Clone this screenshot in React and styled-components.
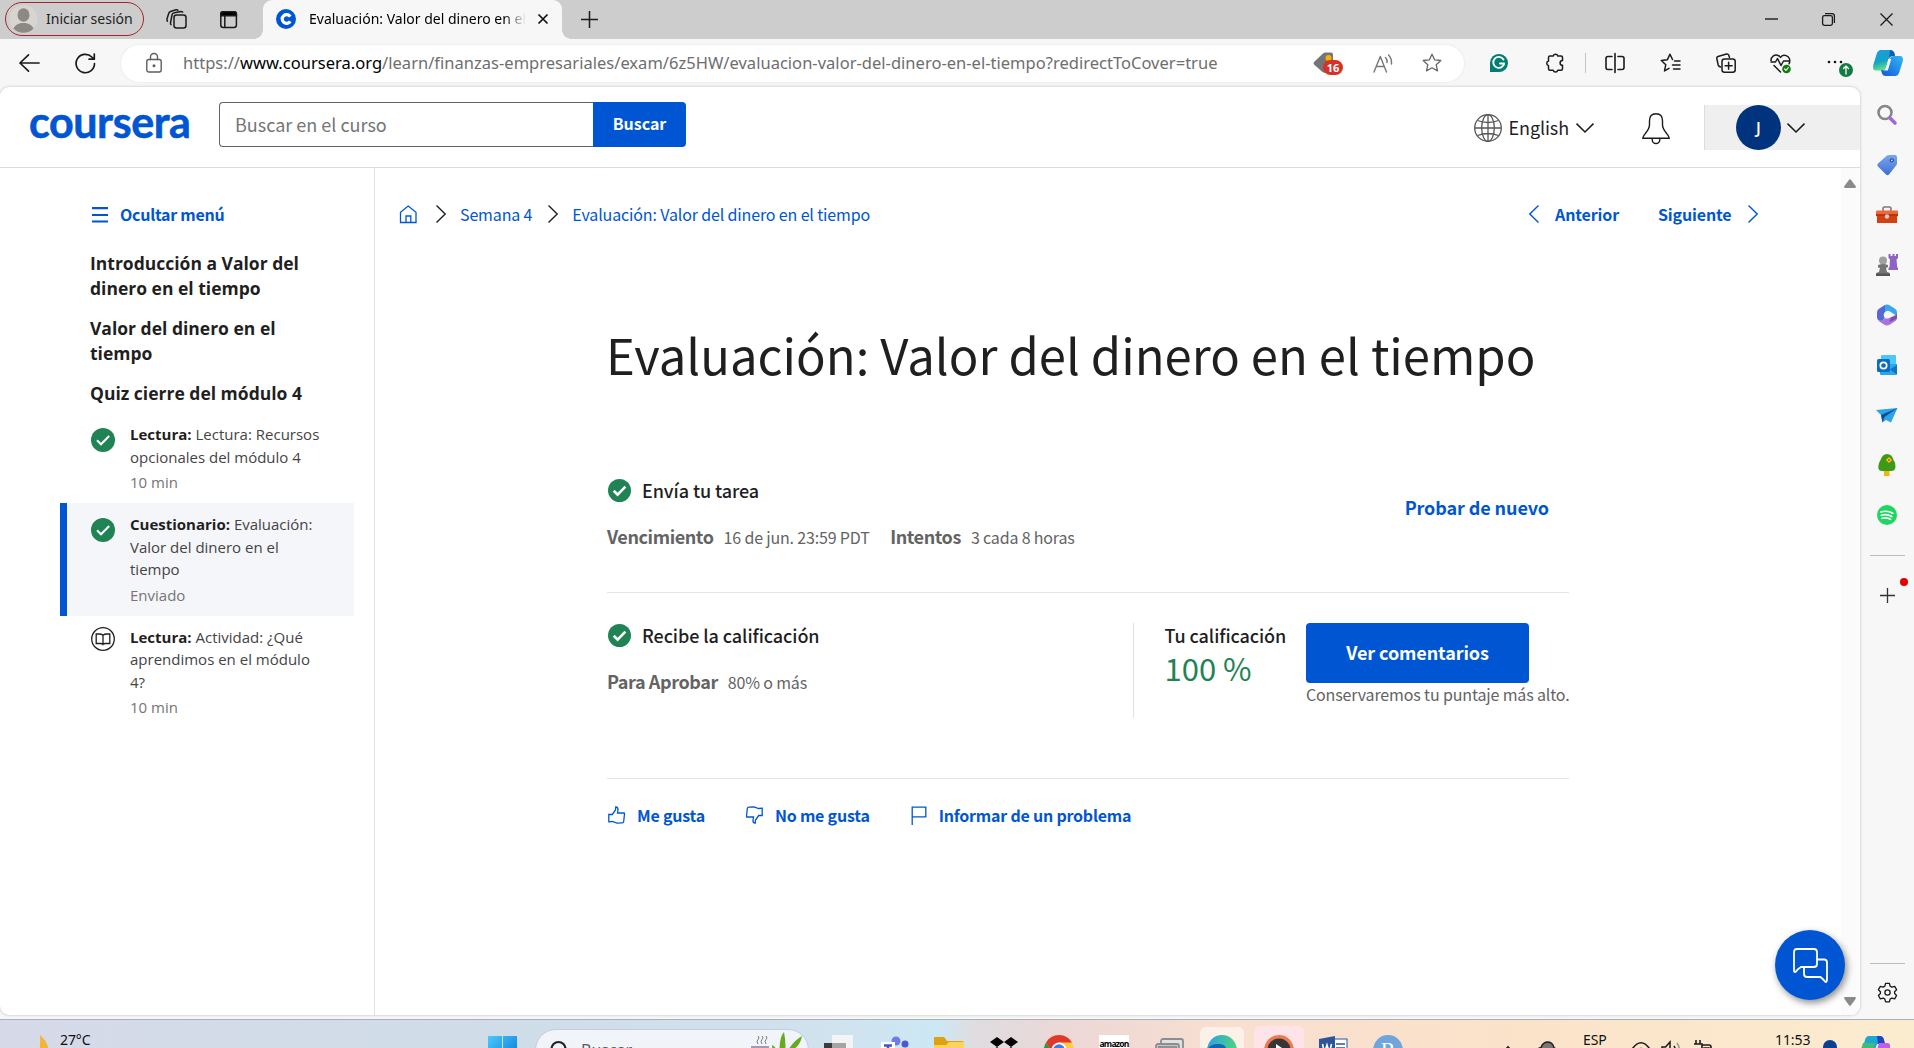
import React from 'react';
import styled, { createGlobalStyle } from 'styled-components';

const SOURCE = '"Noto Sans CJK SC", "Noto Sans", sans-serif';
const OPEN = '"Open Sans", "Noto Sans", sans-serif';
const SYSTEM = '"Noto Sans", "Open Sans", sans-serif';
const BLUE = '#0056d2';
const INK = '#1f1f1f';
const MUTED = '#636363';
const GREEN = '#1f8354';

const GlobalStyle = createGlobalStyle`
  * { box-sizing: border-box; }
  body { margin: 0; overflow: hidden; font-family: ${SOURCE}; color: ${INK}; }
  button, input { font: inherit; border: 0; margin: 0; padding: 0; background: none; }
  a { text-decoration: none; }
  svg { display: block; flex: none; overflow: visible; }
`;

const Desktop = styled.div`
  width: 1914px; height: 1048px; overflow: hidden;
  display: flex; flex-direction: column; background: #f7f7f7;
`;

/* ---------- browser chrome ---------- */
const TabStrip = styled.div`
  height: 39px; flex: none; display: flex; align-items: stretch;
  background: #cdcdcd; font: 14px/20px ${SYSTEM}; color: #000;
`;
const Profile = styled.button`
  && { width: 139px; height: 34px; margin: 2px 0 0 5px; padding-left: 3px;
  display: flex; align-items: center; gap: 8px; color: #222; white-space: nowrap;
  border: 1.4px solid #a4262c; border-radius: 17px; }
`;
const StripIcon = styled.div`
  display: flex; align-items: center; height: 38px; margin-left: ${p => p.$ml}px;
`;
const Tab = styled.div`
  width: 299px; margin-left: 26px; padding: 0 13px 2px; display: flex; align-items: center;
  background: #f7f7f7; border-radius: 9px 9px 0 0; position: relative;
  &::before, &::after {
    content: ''; position: absolute; bottom: 0; width: 9px; height: 9px;
  }
  &::before { left: -9px; background: radial-gradient(circle at 0 0, transparent 8.5px, #f7f7f7 9px); }
  &::after { right: -9px; background: radial-gradient(circle at 100% 0, transparent 8.5px, #f7f7f7 9px); }
`;
const Favicon = styled.span`
  width: 20px; height: 20px; border-radius: 50%; background: ${BLUE};
  display: grid; place-items: center;
`;
const TabTitle = styled.span`
  width: 217px; margin: 0 12px 0 13px; overflow: hidden; white-space: nowrap;
  mask-image: linear-gradient(90deg, #000 90%, transparent 100%);
`;
const Toolbar = styled.div`
  height: 48px; flex: none; display: flex; align-items: center; padding: 0 0 0 19px;
  svg { stroke-linecap: round; stroke-linejoin: round; }
`;
const ToolIcon = styled.div`
  display: flex; align-items: center; justify-content: center; flex: none;
  width: ${p => p.$w || 20}px; margin-left: ${p => p.$ml || 0}px; height: 30px; position: relative;
`;
const AddressBar = styled.div`
  width: 1343px; flex: none; height: 37px; margin-left: 25px; padding-left: 25px; border-radius: 19px;
  background: #fff; display: flex; align-items: center; box-shadow: 0 0 3px rgba(0,0,0,.08);
`;
const Url = styled.span`
  width: 1108px; flex: none; margin-left: 21px; font: 16.5px/24px ${SYSTEM}; letter-spacing: .02px; color: #6e6e6e; white-space: nowrap;
  b { font-weight: 400; color: #000; }
`;
const CountBadge = styled.span`
  position: absolute; left: 10px; top: 12px; width: 20px; height: 15px; border-radius: 8px;
  background: #d93025; color: #fff; font: 700 11px/15px ${SYSTEM}; text-align: center;
`;
const Separator = styled.i`width: 1px; flex: none; height: 20px; background: #c4c4c4; margin-left: 20px;`;

/* ---------- window body ---------- */
const Body = styled.div`height: 932px; flex: none; display: flex;`;
const Page = styled.div`
  width: 1860px; height: 928px; flex: none; background: #fff; overflow: hidden;
  border-radius: 9px; box-shadow: 0 0 3px rgba(0,0,0,.25); display: flex; flex-direction: column; position: relative;
`;
const Header = styled.header`
  height: 81px; flex: none; border-bottom: 1px solid #dcdcdc; display: flex; padding-left: 29px;
`;
const Logo = styled.a`
  width: 190px; height: 60px; padding-top: 5px; font: 700 43px/60px Lato, "Open Sans", sans-serif;
  letter-spacing: -.4px; color: ${BLUE}; -webkit-text-stroke: .6px ${BLUE};
`;
const SearchForm = styled.form`display: flex; height: 45px; margin-top: 15px;`;
const SearchInput = styled.input`
  && { width: 374px; border: 1px solid #636363; border-right: 0; border-radius: 4px 0 0 4px; padding: 0 15px 1px; }
  font: 18px/26px ${SOURCE}; color: #1f1f1f;
  &::placeholder { color: #757575; opacity: 1; }
`;
const SearchButton = styled.button`
  && { width: 93px; background: ${BLUE}; color: #fff; font: 700 16px/24px ${SOURCE}; border-radius: 0 4px 4px 0; padding-bottom: 3px; }
`;
const Language = styled.div`
  margin-left: auto; display: flex; align-items: center; height: 45px; margin-top: 18px;
  font: 18px/26px ${SOURCE}; letter-spacing: -.1px; gap: 7px;
  span { margin-top: -1px; }
`;
const Bell = styled.div`margin: 26px 0 0 48px; width: 28px;`;
const Account = styled.div`
  width: 156px; height: 45px; margin: 18px 0 0 34px; padding-left: 31px; background: #efefef;
  border-left: 1px solid #dcdcdc; display: flex; align-items: center; gap: 6px;
`;
const Avatar = styled.span`
  width: 45px; height: 45px; border-radius: 50%; background: #00337d; color: #fff;
  font: 600 16px/46px ${OPEN}; text-align: center;
`;
const Columns = styled.div`flex: 1; display: flex; min-height: 0;`;

/* ---------- course navigation ---------- */
const SideNav = styled.nav`
  width: 375px; flex: none; border-right: 1px solid #e1e1e1; padding: 31px 20px 0 60px;
`;
const HideMenu = styled.button`
  && { display: flex; align-items: center; height: 30px; margin: 0 0 21.5px 32px; gap: 12px;
  color: ${BLUE}; font: 700 16px/30px ${SOURCE}; letter-spacing: -.27px; }
  svg { margin-top: 2px; }
`;
const Lesson = styled.h3`
  margin: 0 0 ${p => (p.$last ? 7.5 : 15)}px 30px; width: 240px; font: 700 17.5px/25px ${OPEN}; color: ${INK};
`;
const Item = styled.div`
  display: flex; padding: 10px 20px 9.5px ${p => (p.$active ? 23.5 : 30.5)}px;
  border-left: ${p => (p.$active ? `7px solid ${BLUE}` : '0')};
  background: ${p => (p.$active ? '#f5f6f9' : 'transparent')};
  svg { margin-top: ${p => (p.$open ? 1 : 5)}px; }
`;
const ItemText = styled.div`
  margin-left: 15.5px; width: 196px; flex: none; font: 15px/22.5px ${OPEN}; color: #444;
  b { color: ${INK}; }
`;
const ItemNote = styled.div`margin-top: 3px; color: #757575;`;

/* ---------- content ---------- */
const Main = styled.main`flex: 1; padding: 31px 0 0 23px; min-width: 0;`;
const NavRow = styled.div`
  display: flex; align-items: center; height: 30px; width: 1359.5px; color: ${BLUE};
  font: 16px/30px ${SOURCE}; letter-spacing: -.14px;
`;
const Crumb = styled.a`margin: ${p => p.$m}; white-space: nowrap;`;
const Step = styled.a`
  display: flex; align-items: center; gap: 16px; font-weight: 700; margin-left: ${p => p.$ml};
`;
const Sheet = styled.section`width: 962px; margin-left: 209px;`;
const Title = styled.h1`
  margin: 94.5px 0 92.5px -1px; font: 400 49px/60px ${SOURCE}; white-space: nowrap;
`;
const Block = styled.div`
  display: flex; justify-content: space-between; border-bottom: 1px solid #e5e5e5;
  padding: ${p => p.$pad};
`;
const BlockTitle = styled.h2`
  margin: 0; display: flex; align-items: center; gap: 11.5px; height: ${p => p.$h}px; padding-left: .5px;
  font: 500 18px/24px ${SOURCE}; letter-spacing: -.08px; color: ${INK};
`;
const Meta = styled.div`
  margin-top: ${p => p.$mt}px; display: flex; align-items: baseline; color: ${MUTED};
  font: 16px/24px ${SOURCE}; letter-spacing: -.17px; white-space: nowrap;
  b { font-size: 18px; letter-spacing: -.41px; margin-right: 10px; }
  span { margin-right: 20.5px; }
`;
const TextAction = styled.a`
  margin: 19px 20px 0 0; color: ${BLUE}; font: 700 18px/24px ${SOURCE}; letter-spacing: -.1px;
`;
const Grade = styled.div`
  height: 95px; border-left: 1px solid #e1e1e1; padding-left: 31px; display: flex; gap: 19px;
`;
const GradeLabel = styled.div`font: 500 18px/24px ${SOURCE}; letter-spacing: -.08px; width: 122.5px; white-space: nowrap;`;
const GradeValue = styled.div`font: 400 31px/42px ${SOURCE}; color: ${GREEN};`;
const GradeSide = styled.div`width: 263px;`;
const Primary = styled.button`
  && { width: 223px; height: 60px; border-radius: 4px; background: ${BLUE}; color: #fff;
  font: 700 18px/24px ${SOURCE}; letter-spacing: -.1px; display: block; padding-bottom: 2px; }
`;
const Hint = styled.div`
  color: ${MUTED}; font: 16px/24px ${SOURCE}; letter-spacing: -.15px; margin-top: -1px; white-space: nowrap;
`;
const Feedback = styled.div`display: flex; margin-top: 24px; padding-left: 1px;`;
const FeedbackLink = styled.a`
  display: flex; align-items: center; gap: 12px; margin-right: ${p => p.$mr || 0}px; color: ${BLUE};
  font: 700 16px/24px ${SOURCE}; letter-spacing: -.22px;
`;
const Scrollbar = styled.div`
  width: 19px; flex: none; background: #fbfbfb; display: flex; flex-direction: column;
  justify-content: space-between; align-items: center; padding: 11px 1px 9px 0;
`;
const Chat = styled.button`
  && { position: absolute; left: 1775px; top: 843px; width: 70px; height: 70px; border-radius: 50%;
  background: ${BLUE}; box-shadow: 2px 3px 7px rgba(0,0,0,.45); display: grid; place-items: center; }
`;

/* ---------- edge side bar ---------- */
const EdgeBar = styled.aside`
  flex: 1; display: flex; flex-direction: column; align-items: center; padding-top: 3px;
`;
const EdgeIcon = styled.div`
  height: 50px; display: flex; align-items: center; justify-content: center; position: relative;
`;
const EdgeRule = styled.i`width: 35px; height: 1px; background: #bdbdbd; margin: ${p => p.$m};`;
const Dot = styled.i`
  position: absolute; right: -13px; top: 8px; width: 8px; height: 8px; border-radius: 50%; background: #e80000;
`;

/* ---------- taskbar ---------- */
const Taskbar = styled.footer`
  height: 29px; flex: none; overflow: hidden; border-top: 1px solid #a9b0b7;
  background: linear-gradient(90deg, #d6dae8 0, #cfdde9 28%, #d0e2ee 43%, #cce8f4 49%, #dfdcdf 51%, #ecd8d6 56%, #f8dfd0 64%, #fbe3ca 80%, #fbecd0 100%);
`;
const TaskRow = styled.div`
  height: 60px; display: flex; align-items: center; font: 14px/20px ${SYSTEM}; color: #111;
`;
const TaskItem = styled.div`
  width: ${p => p.$w}px; height: ${p => p.$h || 30}px; flex: none; margin-left: ${p => p.$ml}px;
  display: flex; align-items: center; justify-content: center; border-radius: 6px 6px 0 0;
  background: ${p => p.$bg || 'transparent'};
`;
const TaskText = styled.div`
  width: ${p => p.$w}px; flex: none; margin: 0 0 21px ${p => p.$ml}px; letter-spacing: -.1px;
`;
const TaskSearch = styled.div`
  width: 274px; height: 42px; flex: none; border-radius: 21px; margin-left: 18px; padding: 0 6px 0 14px; background: #f1f5fa;
  border: 1px solid #c3cedb; display: flex; align-items: center; font-size: 16px; color: #5d5d5d;
  span { flex: 1; margin-left: 13px; }
`;
const AmazonTile = styled.div`
  width: 30px; height: 30px; flex: none; background: #fff; font: 700 8.5px/17px ${OPEN};
  letter-spacing: -.75px; text-align: center; color: #000;
`;
const LetterDisc = styled.div`
  width: 30px; height: 30px; flex: none; border-radius: 50%; background: #6fa5dc; color: #fff;
  font: 22px/30px "Liberation Serif", serif; text-align: center;
`;

const Svg = ({ w = 20, h, vb, c = '#1b1b1b', sw = 1.4, children }) => (
  <svg width={w} height={h || w} viewBox={vb || `0 0 ${w} ${h || w}`} fill="none" stroke={c} strokeWidth={sw}>{children}</svg>
);
const Chevron = ({ dir, c }) => (
  <Svg w={10} h={18} c={c} sw={1.4}><path d={dir === 'left' ? 'M9.5.5 .8 9l8.7 8.5' : 'M.5.5 9.2 9 .5 17.5'} /></Svg>
);
const ChevronDown = () => <Svg w={18} h={10} sw={1.5}><path d="M.5.6 9 9 17.5.6" /></Svg>;
const DoneIcon = ({ s = 24 }) => (
  <svg width={s} height={s} viewBox="0 0 24 24"><circle cx="12" cy="12" r="12" fill={GREEN} /><path d="m6 12.300 4 4L18.200 8" fill="none" stroke="#fff" strokeWidth={s < 24 ? 2.7 : 2} /></svg>
);
const BookIcon = () => (
  <Svg w={24} c={INK} sw={1.3}><circle cx="12" cy="12" r="11.3" /><path d="M12 8.200C11 7.300 9.500 7 8 7H5.200v9.500h4.500c1 0 1.800.2 2.300 1 .5-.8 1.300-1 2.300-1h4.500V7H16c-1.500 0-3 .3-4 1.200zm0 0v9" /></Svg>
);
const STAR = 'M10 1.200l2.600 5.600 6.200.7-4.600 4.200 1.300 6.200L10 14.800l-5.500 3.100 1.300-6.200L1.200 7.500l6.200-.7z';

function BrowserTop() {
  return (
    <>
      <TabStrip>
        <Profile>
          <svg width="29" height="28" viewBox="0 0 29 28"><circle cx="14.500" cy="14" r="14" fill="#d8d5d1" /><ellipse cx="14.500" cy="10" rx="6" ry="6.800" fill="#8c8984" /><path d="M4.500 23.500c2-4 5.500-5.500 10-5.500s8 1.500 10 5.500c-5 5.800-15 5.800-20 0z" fill="#8c8984" /></svg>
          Iniciar sesión
        </Profile>
        <StripIcon $ml={22}><Svg w={21} h={20} sw={1.5}><rect x="8" y="6" width="12" height="13" rx="2.500" /><path d="M5.500 16c-1-.4-1.200-1-1-2L6 6c.3-1.500 1-2 2.200-2.200L15 2.500c1 0 1.800.3 2 1.200M2 12.500C.8 12 .7 11 1 10l1.500-5c.4-1.500 1-2.200 2-2.500L10 .8c1.200-.3 2 0 2.300 1" /></Svg></StripIcon>
        <StripIcon $ml={33}><Svg w={17} h={17} sw={1.5}><rect x=".8" y=".8" width="15.600" height="15.600" rx="2.500" /><path d="M.8 3.200c0-1.600.8-2.400 2.400-2.400H14c1.600 0 2.400.8 2.400 2.400v1.600H.8z" fill="#000" /><path d="M4.800 5v11" /></Svg></StripIcon>
        <Tab>
          <Favicon><Svg w={12} c="#fff" sw={3.2}><path d="M10.300 3.600A4.400 4.400 0 1 0 10.300 8.400" /></Svg></Favicon>
          <TabTitle>Evaluación: Valor del dinero en el tiempo</TabTitle>
          <Svg w={10} sw={1.7} c="#111"><path d="M.5.5l9 9M9.500.5l-9 9" /></Svg>
        </Tab>
        <StripIcon $ml={19}><Svg w={17} sw={1.5}><path d="M8.500 0v17M0 8.500h17" /></Svg></StripIcon>
        <StripIcon $ml={1167}><Svg w={13} h={2}><path d="M0 1h13" /></Svg></StripIcon>
        <StripIcon $ml={44}><Svg w={13} h={13} sw={1.3}><rect x=".6" y="2.600" width="9.800" height="9.800" rx="1.800" /><path d="M3 .7h7c1.600 0 2.400.8 2.400 2.400V10" /></Svg></StripIcon>
        <StripIcon $ml={45}><Svg w={13} sw={1.3}><path d="M.5.5l12 12M12.500.5l-12 12" /></Svg></StripIcon>
      </TabStrip>
      <Toolbar>
        <ToolIcon $w={21}><Svg w={21} h={18} sw={1.7}><path d="M20 9H1M9.500.8 1 9l8.500 8.200" /></Svg></ToolIcon>
        <ToolIcon $w={21} $ml={35}><Svg w={21} sw={1.7}><path d="M19.500 10.500a9.200 9.200 0 1 1-2.700-6.500l2 2M19.300 1v5.200h-5.200" /></Svg></ToolIcon>
        <AddressBar>
          <Svg w={16} h={20} c="#5e5e5e"><rect x=".8" y="6.500" width="14.400" height="12.500" rx="2" /><path d="M4.500 6.500V4a3.500 3.500 0 0 1 7 0v2.500" /><circle cx="8" cy="12.800" r=".8" fill="#5e5e5e" /></Svg>
          <Url>https://<b>www.coursera.org</b>/learn/finanzas-empresariales/exam/6z5HW/evaluacion-valor-del-dinero-en-el-tiempo?redirectToCover=true</Url>
          <ToolIcon $w={30} $ml={22}>
            <svg width="30" height="22" viewBox="0 0 30 22"><path d="M1 10 10 1.500Q11 .5 12.500.5H18q2 0 2 2V14l-7 7Q11 21 9.500 20L1 12.500q-1-1.200 0-2.500z" fill="#757575" /><circle cx="15.500" cy="6" r="3" fill="#f5b400" /></svg>
            <CountBadge>16</CountBadge>
          </ToolIcon>
          <ToolIcon $ml={30}><Svg w={20} c="#777"><path d="M1 19 7.300 3.500 13.500 19M3.500 13.500H11M12.500 4.500q2 2 1.500 5M15.500 2q3.500 3.500 3 9" /></Svg></ToolIcon>
          <ToolIcon $ml={29}><Svg w={20} c="#666" sw={1.3}><path d={STAR} /></Svg></ToolIcon>
        </AddressBar>
        <ToolIcon $ml={25}><Svg w={20} c="none"><path d="M1 19V9.500A9 9 0 1 1 10 19z" fill="#027e6f" /><path d="M14.500 6.500A5.500 5.500 0 1 0 15.200 10.500H11" stroke="#fff" strokeWidth="1.900" /></Svg></ToolIcon>
        <ToolIcon $ml={36}><Svg w={20} sw={1.5}><path d="M5 3h3.200a2.400 2.400 0 0 1 4.600 0H16q1.500 0 1.500 1.500v3a2.400 2.400 0 1 0 0 4.800v3.500q0 1.500-1.500 1.500h-3.200a2.400 2.400 0 0 1-4.600 0H5q-1.500 0-1.500-1.500v-3.200a2.400 2.400 0 0 1 0-4.600V4.500Q3.500 3 5 3z" /></Svg></ToolIcon>
        <Separator />
        <ToolIcon $ml={19}><Svg w={20} sw={1.6}><path d="M10 .5v19M7 3.500H3Q1 3.500 1 5.500v9q0 2 2 2h4M13 3.500h4q2 0 2 2v9q0 2-2 2h-4" /></Svg></ToolIcon>
        <ToolIcon $ml={35}><Svg w={21} h={20} sw={1.5}><path d="M12.500 6.500 10 1.200 7.300 6.800l-6 .7 4.500 4.200-1.300 6.200L9 15.300M14.500 8H20M12.500 12H20M13.500 16H20" /></Svg></ToolIcon>
        <ToolIcon $ml={36}><Svg w={20} sw={1.5}><path d="M4.500 14 3.500 13.500Q2.500 13 2.200 12L.8 5.500Q.5 4 2 3.500L10.500 1q1.500-.4 2.200 1l.8 2.500" /><rect x="6" y="6" width="13.200" height="13.200" rx="2.500" /><path d="M12.600 9.200v7M9.100 12.700h7" /></Svg></ToolIcon>
        <ToolIcon $ml={34} $w={21}><Svg w={21} sw={1.5}><path d="M1 7.500C1 3.500 4.500 1.500 7.500 2.200 9 2.500 10 3.500 10.500 4.500 11 3.500 12.500 2.200 14 2.200c3 0 6 2.300 5.800 5.800 0 1-.3 2-.8 2.800M4 12.500l6.500 6.500M1 9h4.500l2-3.500 3.500 7 2.500-4.500H19" /><circle cx="16.500" cy="16" r="4.300" fill="#107c10" stroke="none" /><path d="m14.700 16 1.300 1.300 2.300-2.600" stroke="#fff" strokeWidth="1.200" /></Svg></ToolIcon>
        <ToolIcon $ml={36} $w={27}><Svg w={27} h={24} c="none"><circle cx="2" cy="11" r="1.300" fill="#111" /><circle cx="8" cy="11" r="1.300" fill="#111" /><circle cx="14" cy="11" r="1.300" fill="#111" /><circle cx="19" cy="19" r="7" fill="#107c41" /><path d="M19 23v-8M16.500 17.500 19 15l2.500 2.500" stroke="#fff" strokeWidth="1.300" /></Svg></ToolIcon>
        <ToolIcon $ml={19} $w={30}><CopilotMark /></ToolIcon>
      </Toolbar>
    </>
  );
}

const CopilotMark = () => (
  <svg width="30" height="26" viewBox="0 0 30 26">
    <defs>
      <linearGradient id="cpA" x1="0" y1="0" x2=".3" y2="1"><stop offset="0" stopColor="#1a9de0" /><stop offset=".6" stopColor="#14a3c4" /><stop offset="1" stopColor="#62e08a" /></linearGradient>
      <linearGradient id="cpB" x1="1" y1="0" x2="0" y2="1"><stop offset="0" stopColor="#32b8f5" /><stop offset="1" stopColor="#1359d8" /></linearGradient>
    </defs>
    <path d="M8 0h9q3.500 0 4.500 3.500L22 6h-3q-2.500 0-3.200 3L13 18q-.9 2.500-3.500 2.500H3Q-1 20.500.3 15L3.800 3.500Q5 0 8 0z" fill="url(#cpA)" />
    <path d="M22 26h-9q-3.500 0-4.300-3.500L8 20h3q2.500 0 3.200-3L17 8.500Q18 6 20.500 6H27q4 0 2.700 5.500L26.200 22.500Q25 26 22 26z" fill="url(#cpB)" />
    <path d="M17 0q3.500 0 4.500 3.500L22 6h-2q-3 .2-4 3.500z" fill="#0a3fa8" opacity=".7" />
    <path d="M15.300 9h3L14.800 20.500H9.500Q12 20.500 13 18z" fill="#f7f7f7" />
  </svg>
);

function Sidebar() {
  return (
    <SideNav>
      <HideMenu><Svg w={16} c={BLUE} sw={2.2}><path d="M0 1.200h16M0 8h16M0 14.500h16" /></Svg>Ocultar menú</HideMenu>
      <Lesson>Introducción a Valor del dinero en el tiempo</Lesson>
      <Lesson>Valor del dinero en el tiempo</Lesson>
      <Lesson $last>Quiz cierre del módulo 4</Lesson>
      <Item><DoneIcon /><ItemText><b>Lectura:</b> Lectura: Recursos opcionales del módulo 4<ItemNote>10 min</ItemNote></ItemText></Item>
      <Item $active><DoneIcon /><ItemText><b>Cuestionario:</b> Evaluación: Valor del dinero en el tiempo<ItemNote>Enviado</ItemNote></ItemText></Item>
      <Item $open><BookIcon /><ItemText><b>Lectura:</b> Actividad: ¿Qué aprendimos en el módulo 4?<ItemNote>10 min</ItemNote></ItemText></Item>
    </SideNav>
  );
}

function Content() {
  return (
    <Main>
      <NavRow>
        <Svg w={20} h={18} c={BLUE} sw={1.3}><path d="M2.500 17.500V7.200L10.200 1l7.800 6.200v10.300zM8 17.500V11h4.800v6.500" /></Svg>
        <Crumb $m="0 0 0 18px"><Chevron c={INK} /></Crumb>
        <Crumb $m="-1px 0 0 14px">Semana 4</Crumb>
        <Crumb $m="0 0 0 16px"><Chevron c={INK} /></Crumb>
        <Crumb $m="-1px 0 0 14px">Evaluación: Valor del dinero en el tiempo</Crumb>
        <Step $ml="auto"><Chevron dir="left" c={BLUE} /><span>Anterior</span></Step>
        <Step $ml="39px"><span>Siguiente</span><Chevron c={BLUE} /></Step>
      </NavRow>
      <Sheet>
        <Title>Evaluación: Valor del dinero en el tiempo</Title>
        <Block $pad="0 0 43px">
          <div>
            <BlockTitle $h={28}><DoneIcon s={23} />Envía tu tarea</BlockTitle>
            <Meta $mt={20}><b>Vencimiento</b><span>16 de jun. 23:59 PDT</span><b>Intentos</b><span>3 cada 8 horas</span></Meta>
          </div>
          <TextAction>Probar de nuevo</TextAction>
        </Block>
        <Block $pad="30px 0 60px">
          <div>
            <BlockTitle $h={24}><DoneIcon s={23} />Recibe la calificación</BlockTitle>
            <Meta $mt={22}><b>Para Aprobar</b><span>80% o más</span></Meta>
          </div>
          <Grade>
            <div><GradeLabel>Tu calificación</GradeLabel><GradeValue>100 %</GradeValue></div>
            <GradeSide><Primary>Ver comentarios</Primary><Hint>Conservaremos tu puntaje más alto.</Hint></GradeSide>
          </Grade>
        </Block>
        <Feedback>
          <FeedbackLink $mr={41}><Svg w={17} h={18} c={BLUE} sw={1.3}><path d="M.8 8.500h3.500L7.500 4l.3-3.200q2.400.2 2.200 3L9.500 7H16q.6 0 .5.800l-.8 7.700q-.2 1.300-1.500 1.300L9 17.200 4.300 15.500.8 15.800z" /></Svg>Me gusta</FeedbackLink>
          <FeedbackLink $mr={41}><Svg w={17} h={18} c={BLUE} sw={1.3}><path d="M16.200 9.500h-3.500L9.500 14l-.3 3.200q-2.400-.2-2.200-3L7.500 11H1q-.6 0-.5-.8l.8-7.700Q1.500 1.200 2.800 1.200L8 .8l4.700 1.700 3.500-.3z" /></Svg>No me gusta</FeedbackLink>
          <FeedbackLink><Svg w={16} h={19} c={BLUE} sw={1.3}><path d="M1.200 19V1.200h13.600v9.600H1.200" /></Svg>Informar de un problema</FeedbackLink>
        </Feedback>
      </Sheet>
    </Main>
  );
}

function EdgeTools() {
  return (
    <EdgeBar>
      <EdgeIcon><svg width="20" height="20" viewBox="0 0 20 20"><circle cx="8" cy="7.500" r="6.500" fill="none" stroke="#868686" strokeWidth="2.600" /><path d="m13 13 5 5" stroke="#a168d8" strokeWidth="3.600" strokeLinecap="round" /></svg></EdgeIcon>
      <EdgeIcon><svg width="20" height="22" viewBox="0 0 20 22"><defs><linearGradient id="tg" y2="1" x2="0"><stop stopColor="#7aa7ee" /><stop offset="1" stopColor="#3e6fd0" /></linearGradient></defs><path d="M10 1.500Q11 1 12 1h6q2 0 2 2v6q0 1.300-.7 2.200L12 20.500q-1.500 1.500-3 0L1 12.500q-1.500-1.500 0-3z" fill="url(#tg)" /><circle cx="14.800" cy="6.300" r="2.100" fill="#244fa5" /><circle cx="14.800" cy="6.300" r=".9" fill="#dce8ff" /></svg></EdgeIcon>
      <EdgeIcon><svg width="22" height="18" viewBox="0 0 22 18"><path d="M7 5V2.500Q7 1 8.500 1h5Q15 1 15 2.500V5" fill="none" stroke="#7b7b7b" strokeWidth="1.600" /><rect y="4.500" width="22" height="6" rx="1" fill="#f0653a" /><path d="M1 8.500h20V17H1z" fill="#d2410f" /><path d="M0 8h22v2H0z" fill="#b8360b" /><circle cx="11" cy="10.500" r="2.200" fill="#ccc" /></svg></EdgeIcon>
      <EdgeIcon><svg width="22" height="24" viewBox="0 0 22 24"><path d="M12.500 1h2v2h2V1h2v2h1.500V1H22v4l-1.500 1.500.7 7.500.8 1v2h-9.500v-2l1-1 .5-7.500L12.500 5z" fill="#8f63c4" /><circle cx="7" cy="7.500" r="4" fill="#a0a0a0" /><path d="M2 12q5-2 10 0v2q-1.500 1-2 1l1 4q3 .5 3 2v2H0v-2q0-1.500 3-2l1-4q-2 0-2-1z" fill="#757575" /><path d="M0 20.500h14V23H0z" fill="#555" /></svg></EdgeIcon>
      <EdgeIcon><svg width="20" height="22" viewBox="0 0 20 22"><path d="M7 1.500Q10-.5 13 1.500L18 4.800Q20 6 20 8.500V12L13 7.500q-3-1.800-5 1V1z" fill="#36a9e8" /><path d="M0 8.500Q0 6 2 4.800L7 1.500l1-.5v13l-3 3Q0 17 0 13z" fill="#5568d6" /><path d="M0 13q0 5 5 3.500l3.500-2.300L20 12v1.500q0 2.500-2 3.700l-5 3.300q-3 2-6 0l-5-3.300Q0 16 0 13z" fill="#a873dc" /><path d="M14 13.500 20 10v4.500L12.500 18z" fill="#6b3f9d" opacity=".75" /><circle cx="10.200" cy="11" r="3.500" fill="#f7f7f7" /></svg></EdgeIcon>
      <EdgeIcon><svg width="20" height="20" viewBox="0 0 20 20"><rect x="4" width="15" height="12" rx="1" fill="#4cc8f4" /><path d="M3 9h17v10q0 1-1 1H4q-1 0-1-1z" fill="#28a8ea" /><path d="m20 10-7 4.500 7 5z" fill="#1272bd" /><rect y="4" width="13" height="13" rx="1.500" fill="#0a6cc4" /><circle cx="6.500" cy="10.500" r="3.200" fill="none" stroke="#fff" strokeWidth="1.700" /></svg></EdgeIcon>
      <EdgeIcon><svg width="22" height="15" viewBox="0 0 22 15"><path d="M0 2 21.500 0 15 14.500 10 12l-3.500 2.500L5 7z" fill="#2ba4e8" /><path d="M5 7 21.500 0 8.500 9l-2 5.500z" fill="#0a4d94" /></svg></EdgeIcon>
      <EdgeIcon><svg width="18" height="22" viewBox="0 0 18 22"><rect x="6" y="15" width="5.500" height="7" fill="#f7b30c" /><path d="M9 0q5 0 6.500 6Q18 9 17.500 13q-.5 4-4 4h-9Q0 17 .3 12.500.5 9 2.500 6 4.500 0 9 0z" fill="#3c9a16" /><path d="M7.800 6 11 3l3.200 3L11 9z" fill="#f7c416" /><circle cx="11" cy="6" r="1.100" fill="#e2550b" /></svg></EdgeIcon>
      <EdgeIcon><svg width="20" height="20" viewBox="0 0 20 20"><circle cx="10" cy="10" r="10" fill="#1ed760" /><path d="M3.800 7q6.500-2 12 1.200M4.300 10.300q5.700-1.600 10.400 1.200M5 13.300q4.700-1.300 8.500 1" stroke="#fff" strokeWidth="1.700" fill="none" strokeLinecap="round" /></svg></EdgeIcon>
      <EdgeRule $m="15px 0 14px" />
      <EdgeIcon><Svg w={15} c="#333" sw={1.3}><path d="M7.500 0v15M0 7.500h15" /></Svg><Dot /></EdgeIcon>
      <EdgeRule $m="343px 0 3px" />
      <EdgeIcon><Svg w={21} sw={1.5} vb="0 0 24 24"><circle cx="12" cy="12" r="3" /><path d="M9.800 1.500h4.400l.8 3.200 2 1.200 3.200-.9 2.200 3.800-2.300 2.300v2l2.300 2.300-2.200 3.800-3.200-.9-2 1.200-.8 3.200H9.800L9 19.500l-2-1.200-3.200.9-2.200-3.800 2.300-2.300v-2L1.600 8.800 3.800 5l3.200.9 2-1.200z" strokeLinejoin="round" /></Svg></EdgeIcon>
    </EdgeBar>
  );
}

function WindowsTaskbar() {
  return (
    <Taskbar>
      <TaskRow>
        <TaskItem $w={14} $ml={36}><svg width="14" height="30" viewBox="0 0 14 30"><path d="M4 0q8 7 8.500 15Q12 24 6 30H0q5-14 4-30z" fill="#f4b632" /></svg></TaskItem>
        <TaskText $w={40} $ml={10}>27°C</TaskText>
        <TaskItem $w={29} $ml={388}><svg width="29" height="29" viewBox="0 0 29 29"><defs><linearGradient id="wn" x2="1" y2="1"><stop stopColor="#4cc9fb" /><stop offset="1" stopColor="#0072d4" /></linearGradient></defs><path d="M0 0h14v14H0zM15 0h14v14H15zM0 15h14v14H0zM15 15h14v14H15z" fill="url(#wn)" /></svg></TaskItem>
        <TaskSearch>
          <Svg w={18} sw={2.2} c="#222"><circle cx="8.500" cy="8" r="7" /><path d="m13 13 5 5" /></Svg>
          <span>Buscar</span>
          <svg width="52" height="36" viewBox="0 0 52 36"><path d="M8 12q-2-3 0-4.500T8 4M12 12q-2-3 0-4.500T12 4M16 12q-2-3 0-4.500T16 4" stroke="#777" fill="none" /><path d="M1 14h18v14H5Q1 24 1 14z" fill="#a898b8" /><path d="M31 34Q38 20 34 0q-7 8-3 34zM31 34Q38 12 52 4q-2 12-14 16zM31 24q-4-8-9-11 0 8 7 13z" fill="#6aa81c" /></svg>
        </TaskSearch>
        <TaskItem $w={29} $ml={15}><svg width="29" height="30" viewBox="0 0 29 30"><rect x="8" width="21" height="24" rx="1" fill="#f4f4f4" /><rect y="8" width="22" height="18" fill="#3c3c3c" /><rect x="8" y="8" width="14" height="16" fill="#a5a5a5" /></svg></TaskItem>
        <TaskItem $w={28} $ml={28}><svg width="28" height="28" viewBox="0 0 28 28"><circle cx="15" cy="5" r="4.500" fill="#6f7be6" /><circle cx="24" cy="8" r="3.500" fill="#5059c9" /><path d="M5 12h23v10q-6 8-17 5z" fill="#5059c9" /><rect y="6" width="14" height="16" fill="#fff" /><path d="M3 9.500h8M7 9.500v9" stroke="#4b53bc" strokeWidth="2.500" /></svg></TaskItem>
        <TaskItem $w={30} $ml={25}><svg width="30" height="26" viewBox="0 0 30 26"><path d="M0 1q0-1 1-1h9l3 4h15q2 0 2 2v18H0z" fill="#e0a010" /><path d="M0 8h12l3-3h15v21H0z" fill="#fcd45a" /></svg></TaskItem>
        <TaskItem $w={28} $ml={26}><svg width="28" height="26" viewBox="0 0 28 26"><path d="m7 0 7 5-7 5-7-5zM21 0l7 5-7 5-7-5zM7 10l7 5-7 5-7-5zM21 10l7 5-7 5-7-5zM14 17l7 4.500-7 4.500-7-4.500z" fill="#050505" /></svg></TaskItem>
        <TaskItem $w={30} $ml={26}><svg width="30" height="30" viewBox="0 0 30 30"><circle cx="15" cy="15" r="15" fill="#ffcd42" /><path d="M2 7.500A15 15 0 0 1 28 7.500H15l-6.500 11z" fill="#e1382c" /><path d="m2 7.500 6.500 11L15 30A15 15 0 0 1 2 7.500z" fill="#229b4b" /><circle cx="15" cy="15" r="7.500" fill="#fff" /><circle cx="15" cy="15" r="5.800" fill="#3d7de8" /></svg></TaskItem>
        <TaskItem $w={30} $ml={25}><AmazonTile>amazon</AmazonTile></TaskItem>
        <TaskItem $w={29} $ml={26}><Svg w={29} h={24} c="#8b8d90" sw={1.8}><rect x="6" y="1" width="22" height="18" rx="2" fill="#e1e1df" /><rect x="1" y="6" width="23" height="18" rx="2" fill="#c2c6c9" /><path d="M3 9h19" /></Svg></TaskItem>
        <TaskItem $w={44} $h={46} $ml={16} $bg="rgba(255,250,244,.65)"><svg width="30" height="30" viewBox="0 0 30 30"><defs><linearGradient id="eg" x2="1" y2=".3"><stop stopColor="#2d9fe8" /><stop offset="1" stopColor="#48d57b" /></linearGradient></defs><circle cx="15" cy="15" r="15" fill="url(#eg)" /><path d="M0 17Q1 9 11 9q8 0 8 5-5 0-4 8l4 7.500A15 15 0 0 1 0 17z" fill="#1464bd" /><path d="M14 16q1-3 4-3 2 0 1.500 3z" fill="#fff" /></svg></TaskItem>
        <TaskItem $w={50} $h={48} $ml={10} $bg="rgba(255,228,236,.85)"><svg width="30" height="30" viewBox="0 0 30 30"><circle cx="15" cy="15" r="15" fill="#ed7a4c" /><circle cx="15" cy="15" r="11.500" fill="#34363a" /><path d="m12 9 9 6-9 6z" fill="#fff" /></svg></TaskItem>
        <TaskItem $w={29} $ml={15}><svg width="29" height="28" viewBox="0 0 29 28"><rect x="10" y="3" width="18" height="22" fill="#fff" stroke="#2a579a" /><path d="M17 8h9M17 12h9M17 16h9" stroke="#2a579a" strokeWidth="1.500" /><path d="m0 3 16-3v28L0 25z" fill="#2a579a" /><path d="m3.500 8 2 9 2.500-8 2.500 8 2-9" fill="none" stroke="#fff" strokeWidth="1.600" /></svg></TaskItem>
        <TaskItem $w={30} $ml={25}><LetterDisc>R</LetterDisc></TaskItem>
        <TaskItem $w={12} $ml={99}><Svg w={12} h={9} sw={1.6}><path d="m1 6 5-5 5 5" /></Svg></TaskItem>
        <TaskItem $w={22} $ml={22}><svg width="22" height="18" viewBox="0 0 22 18"><path d="M4 14Q0 13 1 9.500 2 7 5 6.500 7 1 12 1q5 .5 6 6 4 1 3 5-1 2-3 2z" fill="#777" stroke="#222" strokeWidth="1.500" /></svg></TaskItem>
        <TaskText $w={30} $ml={25}>ESP</TaskText>
        <TaskItem $w={20} $ml={18}><Svg w={20} h={19} sw={1.6}><path d="M.8 8.500Q10-5 19.200 8.500M4.500 11q5.500-7 11 0M8.500 13.500q1.500-2 3 0" /></Svg></TaskItem>
        <TaskItem $w={22} $ml={10}><Svg w={22} h={18} sw={1.5}><path d="M1 6h3.500L9 1v16l-4.500-5H1zM13 5q2.500 4 0 8" /><path d="M16 2q5 7 0 14" stroke="#999" /></Svg></TaskItem>
        <TaskItem $w={20} $ml={10}><Svg w={20} h={20} sw={1.6}><path d="M9 5h7q2 0 2 2v8q0 2-2 2H9M3 0v4M7 0v4M1 4h8v3q0 3-4 3v9" /><path d="M11 8h5v6h-5z" fill="#111" /></Svg></TaskItem>
        <TaskText $w={38} $ml={62}>11:53</TaskText>
        <TaskItem $w={14} $ml={10}><svg width="14" height="20" viewBox="0 0 14 20"><circle cx="7" cy="7" r="7" fill="#0a3f92" /></svg></TaskItem>
        <TaskItem $w={28} $ml={25}><svg width="30" height="28" viewBox="0 0 30 28"><path d="M8 0h11q3 0 4 4l1 4h-8q-3 8-4 13H3q-4 0-2.500-5L4 4q1-4 4-4z" fill="#1da7d5" /><path d="M0 14q1-4 2-7h12l-4 14H3q-4 0-3-7z" fill="#42bd73" /><path d="m16 0h3q3 0 4 4l1 4h-7z" fill="#1c47bf" /><path d="M18 7h8q4 0 3 5l-4 12q-1 4-4 4h-9z" fill="#c45bea" /></svg></TaskItem>
      </TaskRow>
    </Taskbar>
  );
}

export default function App() {
  return (
    <Desktop>
      <GlobalStyle />
      <BrowserTop />
      <Body>
        <Page>
          <Header>
            <Logo>coursera</Logo>
            <SearchForm><SearchInput placeholder="Buscar en el curso" /><SearchButton type="button">Buscar</SearchButton></SearchForm>
            <Language>
              <Svg w={28} c="#555" sw={1.3}><circle cx="14" cy="14" r="13.300" /><ellipse cx="14" cy="14" rx="6.300" ry="13.300" /><path d="M.7 14h26.600M3.500 6.500q10.500 4 21 0M3.500 21.500q10.500-4 21 0M14 .7v26.600" /></Svg>
              <span>English</span>
              <ChevronDown />
            </Language>
            <Bell><Svg w={28} h={31} sw={1.4}><path d="M14 .8c4.500 0 6.500 3 6.500 7v4c0 3.500 1.500 5.500 4 8.500 1.500 2 2.700 3 2.700 5H.8c0-2 1.200-3 2.700-5 2.500-3 4-5 4-8.500v-4c0-4 2-7 6.500-7zM10.200 25.500v1.200a3.800 3.800 0 0 0 7.600 0v-1.200" /></Svg></Bell>
            <Account><Avatar>J</Avatar><ChevronDown /></Account>
          </Header>
          <Columns>
            <Sidebar />
            <Content />
            <Scrollbar>
              <svg width="12" height="9" viewBox="0 0 12 9"><path d="M5 .8q1-1.200 2 0l4.700 6.400Q12.300 9 11 9H1Q-.3 9 .3 7.200z" fill="#8a8a8a" /></svg>
              <svg width="12" height="9" viewBox="0 0 12 9"><path d="M5 8.200q1 1.200 2 0l4.700-6.400Q12.300 0 11 0H1Q-.3 0 .3 1.800z" fill="#8a8a8a" /></svg>
            </Scrollbar>
          </Columns>
          <Chat><Svg w={35} h={35} c="#fff" sw={1.8}><path d="M4 1h17q3 0 3 3v12q0 3-3 3H8q-4 2.500-5.500 5Q1 24.500 1 22.500V4q0-3 3-3z" /><path d="M24 11.500h7q3 0 3 3V31q0 3-1.500 3Q30 31 27.500 29H14q-3 0-3-3v-6.500" /></Svg></Chat>
        </Page>
        <EdgeTools />
      </Body>
      <WindowsTaskbar />
    </Desktop>
  );
}
